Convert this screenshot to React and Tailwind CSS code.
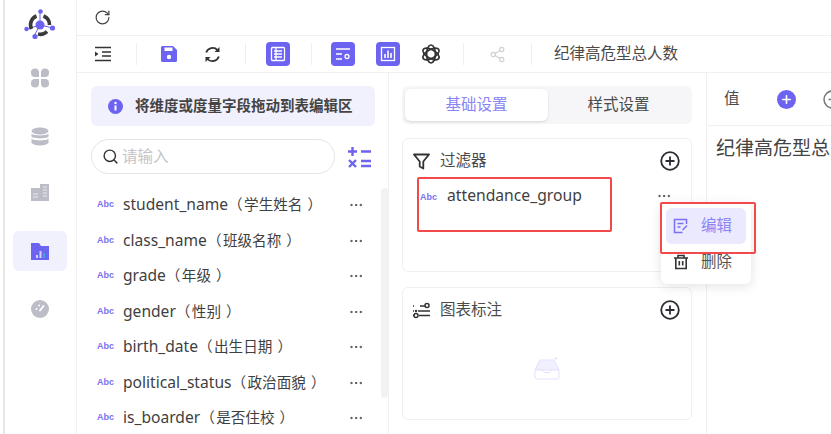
import React from 'react';
import { RotateCw, Share2, Search, Plus, Ellipsis } from 'lucide-react';

const FIELDS = [
  ['student_name', '学生姓名'],
  ['class_name', '班级名称'],
  ['grade', '年级'],
  ['gender', '性别'],
  ['birth_date', '出生日期'],
  ['political_status', '政治面貌'],
  ['is_boarder', '是否住校'],
];

const FONT = { fontFamily: '"Noto Sans", "Noto Sans CJK SC", sans-serif' };

function Logo() {
  return (
    <svg width="34" height="34" viewBox="0 0 34 34">
      <path d="M17 3 L17 17 M17 17 L4 21 M17 17 L30 20 M17 17 L11 28" stroke="#6c63f0" strokeWidth="1" />
      <path d="M8.500 21 A9.500 9.500 0 0 1 13.500 8" fill="none" stroke="#3a3a3a" strokeWidth="3.600" />
      <path d="M20.500 8 A9.500 9.500 0 0 1 26.500 17" fill="none" stroke="#3a3a3a" strokeWidth="3.600" />
      <path d="M24 23.500 A9.500 9.500 0 0 1 15 26" fill="none" stroke="#3a3a3a" strokeWidth="3.600" />
      <circle cx="17" cy="17" r="4.500" fill="#6c63f0" />
      <circle cx="17.500" cy="3.500" r="2.300" fill="#6c63f0" />
      <circle cx="3.500" cy="21" r="2.200" fill="#6c63f0" />
      <circle cx="29.500" cy="20" r="2.600" fill="#6c63f0" />
      <circle cx="12" cy="28.500" r="2.600" fill="#6c63f0" />
    </svg>
  );
}

function NavIcon({ name }) {
  const c = '#bcbdc6';
  if (name === 'apps') {
    return (
      <svg width="20" height="20" viewBox="0 0 20 20" fill={c}>
        <path d="M1 5a4 4 0 0 1 8-1v5H5a4 4 0 0 1-4-4ZM19 5a4 4 0 0 0-8-1v5h4a4 4 0 0 0 4-4ZM1 15a4 4 0 0 1 4-4h4v5a4 4 0 0 1-8-1ZM19 15a4 4 0 0 0-4-4h-4v5a4 4 0 0 0 8-1Z" />
      </svg>
    );
  }
  if (name === 'db') {
    return (
      <svg width="20" height="20" viewBox="0 0 20 20" fill={c}>
        <ellipse cx="10" cy="4" rx="8.500" ry="3.500" />
        <path d="M1.500 6.500C3 9 17 9 18.500 6.500V9.500C17 12 3 12 1.500 9.500ZM1.500 11.500C3 14 17 14 18.500 11.500V15.500C17 19.500 3 19.500 1.500 15.500Z" />
      </svg>
    );
  }
  if (name === 'table') {
    return (
      <svg width="20" height="18" viewBox="0 0 20 18" fill={c}>
        <path d="M1 5h9V1h9v17H1Z" />
        <path d="M13 4h4M13 7h4M13 10h4M13 13h4M3 11h5M3 14h5" stroke="#e9e9ee" strokeWidth="1" />
      </svg>
    );
  }
  if (name === 'folder') {
    return (
      <svg width="20" height="18" viewBox="0 0 20 18">
        <path d="M1 1h8l2 3h8v14H1Z" fill="#6c63f0" />
        <path d="M6 13h2v3H6ZM9.500 9h2v7h-2Z" fill="#d6d4ff" />
        <path d="M13 11h2v5h-2Z" fill="#38a7d8" />
      </svg>
    );
  }
  return (
    <svg width="18" height="18" viewBox="0 0 18 18">
      <circle cx="9" cy="9" r="9" fill={c} />
      <path d="M9 10.500 12.500 6" stroke="#fff" strokeWidth="2" strokeLinecap="round" />
      <circle cx="5.500" cy="9" r="1" fill="#fff" />
      <circle cx="8" cy="5.500" r="1" fill="#fff" />
    </svg>
  );
}

function Divider() {
  return <div className="w-px h-[22px] bg-[#efeff2]" />;
}

function SolidBtn({ children, className }) {
  return (
    <div className={`w-6 h-6 rounded-[4px] bg-[#6c63f0] flex items-center justify-center ${className || ''}`}>
      <svg width="18" height="18" viewBox="0 0 18 18" fill="none" stroke="#fff" strokeWidth="1.300">
        {children}
      </svg>
    </div>
  );
}

function Abc({ className }) {
  return (
    <span className={`font-bold text-[9px] leading-none text-[#7a72f2] ${className || ''}`} style={{ fontFamily: '"Liberation Sans", sans-serif' }}>
      Abc
    </span>
  );
}

function PlusRing() {
  return (
    <svg className="ml-auto" width="20" height="20" viewBox="0 0 20 20" fill="none" stroke="#2b2b33" strokeWidth="1.800">
      <circle cx="10" cy="10" r="8.800" />
      <path d="M5.500 10h9M10 5.500v9" />
    </svg>
  );
}

function Toolbar() {
  return (
    <div className="h-[37px] flex items-center border-b border-[#f0f0f3] shrink-0">
      <svg className="ml-[18px]" width="17" height="16" viewBox="0 0 17 16" fill="none" stroke="#333" strokeWidth="1.500">
        <path d="M0 1.500h16M7 6h9M7 10h9M0 14.500h16" />
        <path d="M0 5.500 3.500 8 0 10.500Z" fill="#333" stroke="none" />
      </svg>
      <div className="ml-[24px]"><Divider /></div>
      <svg className="ml-[24px]" width="16" height="16" viewBox="0 0 16 16">
        <path d="M1.500 0H12l4 4v10.500a1.500 1.500 0 0 1-1.500 1.500h-13A1.500 1.500 0 0 1 0 14.500V1.500A1.500 1.500 0 0 1 1.500 0Z" fill="#6c63f0" />
        <rect x="3.500" y="1.500" width="8" height="3.500" fill="#fff" />
        <circle cx="8" cy="11" r="2.200" fill="#fff" />
      </svg>
      <svg className="ml-[27px]" width="17" height="17" viewBox="0 0 17 17" fill="none" stroke="#333" strokeWidth="1.800">
        <path d="M2.200 6.500A6.700 6.700 0 0 1 13.500 4" />
        <path d="M14.800 10.500A6.700 6.700 0 0 1 3.500 13" />
        <path d="M15.500 1v5h-5Z" fill="#333" stroke="none" />
        <path d="M1.500 16v-5h5Z" fill="#333" stroke="none" />
      </svg>
      <div className="ml-[24px]"><Divider /></div>
      <SolidBtn className="ml-[20px]">
        <rect x="2.500" y="2.500" width="13" height="13" rx="1" />
        <path d="M5 6h8M5 9h8M5 12h8M7 3v12" />
      </SolidBtn>
      <div className="ml-[21px]"><Divider /></div>
      <SolidBtn className="ml-[19px]">
        <path d="M2 4h14M2 9h6M2 14h6" />
        <circle cx="13" cy="11.500" r="2" />
      </SolidBtn>
      <SolidBtn className="ml-[21px]">
        <rect x="2.500" y="2.500" width="13" height="13" />
        <path d="M6 13V9M9 13V5.500M12 13V8" strokeWidth="1.600" />
      </SolidBtn>
      <svg className="ml-[21px]" width="20" height="20" viewBox="0 0 20 20" fill="none" stroke="#333" strokeWidth="1.700">
        <ellipse cx="10" cy="10" rx="4.400" ry="9" />
        <ellipse cx="10" cy="10" rx="4.400" ry="9" transform="rotate(60 10 10)" />
        <ellipse cx="10" cy="10" rx="4.400" ry="9" transform="rotate(120 10 10)" />
      </svg>
      <div className="ml-[22px]"><Divider /></div>
      <Share2 className="ml-[25px]" size={17} strokeWidth={1.600} color="#cfcfd3" />
      <div className="ml-[25px]"><Divider /></div>
      <span className="ml-[22px] text-[15.500px] text-[#4a4a4a]">纪律高危型总人数</span>
    </div>
  );
}

function FieldPanel() {
  return (
    <div className="w-[312px] shrink-0 border-r border-[#f0f0f3] pl-[14px] relative">
      <div className="mt-[13px] w-[284px] h-10 rounded-md bg-[#f0f1fd] flex items-center pl-[17px] text-[14.500px] font-semibold text-[#444]">
        <svg width="15" height="15" viewBox="0 0 15 15">
          <circle cx="7.500" cy="7.500" r="7.500" fill="#6c63f0" />
          <path d="M7.500 6.500v5" stroke="#fff" strokeWidth="2" />
          <circle cx="7.500" cy="4" r="1.200" fill="#fff" />
        </svg>
        <span className="ml-[12px]">将维度或度量字段拖动到表编辑区</span>
      </div>
      <div className="mt-[13px] flex items-center">
        <div className="w-[244px] h-[35px] rounded-full border border-[#e4e4e8] flex items-center pl-[10px]">
          <Search size={17} strokeWidth={2} color="#333" />
          <span className="ml-[3px] text-[15.500px] text-[#c4c4c8]">请输入</span>
        </div>
        <svg className="ml-[13px]" width="24" height="22" viewBox="0 0 24 22" fill="none" stroke="#6c63f0" strokeWidth="2.400">
          <path d="M0 5.500h9M4.500 1v9M13 5.500h10M1 14l7 7M8 14l-7 7M13 15h10M13 20h10" />
        </svg>
      </div>
      <div className="mt-[13px] flex flex-col">
        {FIELDS.map(([name, label]) => (
          <div key={name} className="h-[35.500px] flex items-center pl-[6px] relative">
            <Abc className="w-[26px]" />
            <span className="text-[15.600px] text-[#3f3f3f] whitespace-nowrap">
              {name}
              <span className="text-[14.600px]">
                <span className="inline-block w-[16px] text-left">（</span>
                {label}
                <span className="inline-block pl-[5px]">）</span>
              </span>
            </span>
            <Ellipsis className="absolute left-[257px] top-[10px]" size={16} color="#444" strokeWidth={1.500} />
          </div>
        ))}
      </div>
      <div className="absolute right-[0px] top-[115px] w-[7px] h-[210px] rounded-full bg-[#f2f2f4]" />
    </div>
  );
}

function CardHead({ icon, title }) {
  return (
    <div className="flex items-center h-[22px] pl-[10px] pr-[11px]">
      {icon}
      <span className="ml-[10px] text-[15.500px] text-[#4a4a4a]">{title}</span>
      <PlusRing />
    </div>
  );
}

function SettingsPanel() {
  return (
    <div className="w-[318px] shrink-0 border-r border-[#f0f0f3] pl-[13px] relative">
      <div className="mt-[13px] w-[290px] h-[38px] rounded-md bg-[#f6f6f8] p-[3px] flex items-center text-[15.500px]">
        <div className="w-[143px] h-[32px] rounded-md bg-white shadow-sm flex items-center justify-center text-[#8b84f4]">基础设置</div>
        <div className="flex-1 text-center text-[#4a4a4a]">样式设置</div>
      </div>
      <div className="mt-[14px] w-[290px] h-[134px] rounded-md border border-[#f0f0f3] pt-[11px]">
        <CardHead
          icon={
            <svg width="17" height="17" viewBox="0 0 17 17" fill="none" stroke="#333" strokeWidth="1.800" strokeLinejoin="round">
              <path d="M1 1.500h15l-5.700 7v7l-3.600-2v-5Z" />
            </svg>
          }
          title="过滤器"
        />
      </div>
      <div className="mt-[15px] w-[290px] h-[133px] rounded-md border border-[#f0f0f3] pt-[11px]">
        <CardHead
          icon={
            <svg width="17" height="17" viewBox="0 0 17 17" fill="none" stroke="#333" strokeWidth="1.500">
              <path d="M7 4h5M0 4h1M5 9h12M0 13.500h1M6 13.500h11M0 9h1" />
              <circle cx="14" cy="3.500" r="2" />
              <circle cx="3" cy="13.500" r="2" />
              <circle cx="3" cy="9" r="0.500" />
            </svg>
          }
          title="图表标注"
        />
        <div className="mt-[35px] flex justify-center">
          <svg width="30" height="26" viewBox="0 0 30 26" fill="none" stroke="#e3e1fb" strokeWidth="1">
            <path d="M3 14 8 4h14l5 10Z" fill="#f1f0fe" />
            <path d="M3 14h7.500l2 2.500h5l2-2.500H27v7a2 2 0 0 1-2 2H5a2 2 0 0 1-2-2Z" fill="#fff" />
            <path d="M24 1v3M22.500 2.500h3" />
          </svg>
        </div>
      </div>
      <div className="absolute left-[28px] top-[104px] w-[195px] h-[55px] rounded-[2px] border-2 border-[#f24a4a] flex items-start pt-[5px] pl-[1px]">
        <Abc className="w-[27px] mt-[9px]" />
        <span className="text-[15.700px] leading-[20px] mt-[1px] text-[#3f3f3f]">attendance_group</span>
      </div>
      <Ellipsis className="absolute left-[267px] top-[115px]" size={16} color="#444" strokeWidth={1.500} />
      <div className="absolute left-[272px] top-[130px] w-[90px] h-[81px] rounded-md bg-white shadow-[0_2px_12px_rgba(0,0,0,0.12)] px-[5px] pt-[5px]">
        <div className="h-[36px] rounded-md bg-[#eae9fd] flex items-center pl-[7px] text-[15.500px] text-[#8b84f4]">
          <svg width="16" height="16" viewBox="0 0 16 16" fill="none" stroke="#7a72f2" strokeWidth="1.500">
            <path d="M13.500 6V1.500h-12v13h8" />
            <path d="M4.500 5.500h6M4.500 9h3M9.500 12l4.500-4.500" />
          </svg>
          <span className="ml-[12px]">编辑</span>
        </div>
        <div className="h-[36px] flex items-center pl-[7px] text-[15.500px] text-[#555]">
          <svg width="16" height="16" viewBox="0 0 16 16" fill="none" stroke="#333" strokeWidth="1.600">
            <path d="M1 4h14M5 4V1.500h6V4M2.800 4v10.500h10.400V4M6.300 7v4.500M9.700 7v4.500" />
          </svg>
          <span className="ml-[12px]">删除</span>
        </div>
      </div>
      <div className="absolute left-[271px] top-[129px] w-[96px] h-[52px] rounded-[2px] border-2 border-[#f24a4a]" />
    </div>
  );
}

function ValuePanel() {
  return (
    <div className="flex-1 min-w-0 overflow-hidden">
      <div className="h-[53px] flex items-center pl-[17px] border-b border-[#f0f0f3]">
        <span className="text-[15.500px] text-[#4a4a4a]">值</span>
        <div className="ml-[37px] w-[19px] h-[19px] rounded-full bg-[#6c63f0] flex items-center justify-center shrink-0">
          <Plus size={13} strokeWidth={3} color="#fff" />
        </div>
        <svg className="ml-[27px] shrink-0" width="19" height="19" viewBox="0 0 19 19" fill="none" stroke="#777" strokeWidth="1.500">
          <circle cx="9.500" cy="9.500" r="8.500" />
          <path d="M5.500 9.500h8" />
        </svg>
      </div>
      <div className="pl-[9px] pt-[8px] text-[19px] leading-[28px] text-[#444] whitespace-nowrap">纪律高危型总人数</div>
    </div>
  );
}

export default function App() {
  return (
    <div className="w-[831px] h-[434px] overflow-hidden bg-white flex" style={FONT}>
      <div className="w-[5px] shrink-0 bg-[#e6e6e6] border-l-[3px] border-white" />
      <div className="w-[72px] shrink-0 border-r border-[#f0f0f3] pr-[2px] flex flex-col items-center">
        <div className="mt-[8px] h-[34px]"><Logo /></div>
        <div className="mt-[26px]"><NavIcon name="apps" /></div>
        <div className="mt-[39px]"><NavIcon name="db" /></div>
        <div className="mt-[36px]"><NavIcon name="table" /></div>
        <div className="mt-[30px] w-[54px] h-10 rounded-md bg-[#f0f1fd] flex items-center justify-center"><NavIcon name="folder" /></div>
        <div className="mt-[29px]"><NavIcon name="gauge" /></div>
      </div>
      <div className="flex-1 min-w-0 flex flex-col">
        <div className="h-[36px] shrink-0 flex items-center pl-[17px] border-b border-[#f0f0f3]">
          <RotateCw size={17} strokeWidth={1.700} color="#444" />
        </div>
        <Toolbar />
        <div className="flex-1 min-h-0 flex">
          <FieldPanel />
          <SettingsPanel />
          <ValuePanel />
        </div>
      </div>
    </div>
  );
}
